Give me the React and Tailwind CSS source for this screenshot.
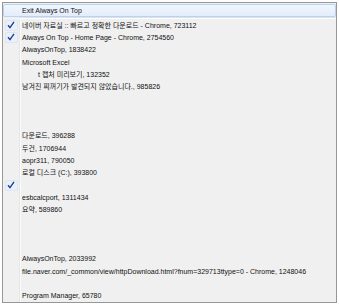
import React from 'react';

const items = [
    { text: '네이버 자료실 :: 빠르고 정확한 다운로드 - Chrome, 723112', checked: true },
    { text: 'Always On Top - Home Page - Chrome, 2754560', checked: true },
    { text: 'AlwaysOnTop, 1838422' },
    { text: 'Microsoft Excel' },
    { text: 't 캡처 미리보기, 132352', indent: true },
    { text: '남겨진 찌꺼기가 발견되지 않았습니다., 985826' },
    { text: '' },
    { text: '' },
    { text: '' },
    { text: '다운로드, 396288' },
    { text: '두건, 1706944' },
    { text: 'aopr311, 790050' },
    { text: '로컬 디스크 (C:), 393800' },
    { text: '', checked: true },
    { text: 'esbcalcport, 1311434' },
    { text: '요약, 589860' },
    { text: '' },
    { text: '' },
    { text: '' },
    { text: 'AlwaysOnTop, 2033992' },
    { text: 'file.naver.com/_common/view/httpDownload.html?fnum=329713ttype=0 - Chrome, 1248046' },
    { text: '' },
    { text: 'Program Manager, 65780' },
];

const Check = () => (
    <svg width="8" height="8" viewBox="0 0 8 8">
        <path d="M1 4.2 L3 6.6 L7 0.8" fill="none" stroke="#1b3f9a" strokeWidth="1.4" />
    </svg>
);

const App = () => {
    return (
        <div className="w-[339px] h-[306px] bg-white pt-[2px] pl-[2px] overflow-hidden" style={{ fontFamily: '"Liberation Sans", "Noto Sans CJK KR", sans-serif' }}>
            <div className="w-[335px] h-[301px] border border-[#979797] bg-[#f0f0f0] flex flex-col text-[7px] text-[#111] leading-none">
                <div className="pt-[1px] px-0">
                    <div className="h-[13px] border border-[#b8d3f4] rounded-[2px] bg-gradient-to-b from-[#f1f6fd] to-[#e3edfb] flex items-center pl-[18px]">
                        Exit Always On Top
                    </div>
                </div>
                <div className="h-[2px] flex">
                    <div className="w-[16px]" />
                    <div className="flex-1 border-t border-[#e0e0e0] bg-white" />
                </div>
                <div className="flex flex-col">
                    {items.map((item, i) => (
                        <div key={i} className="h-[12.3px] flex items-stretch">
                            <div className="w-[16px] flex items-center justify-center">
                                {item.checked && (
                                    <div className="w-[13px] h-[11px] rounded-[2px] border border-[#dbe5f3] bg-[#ebf1fa] flex items-center justify-center">
                                        <Check />
                                    </div>
                                )}
                            </div>
                            <div className="w-[1px] bg-[#e6e6e6]" />
                            <div className="w-[1px] bg-[#fafafa]" />
                            <div className={`flex items-center whitespace-nowrap ${item.indent ? 'pl-[17px]' : 'pl-[1px]'}`}>
                                {item.text}
                            </div>
                        </div>
                    ))}
                </div>
            </div>
        </div>
    );
};

export default App;
